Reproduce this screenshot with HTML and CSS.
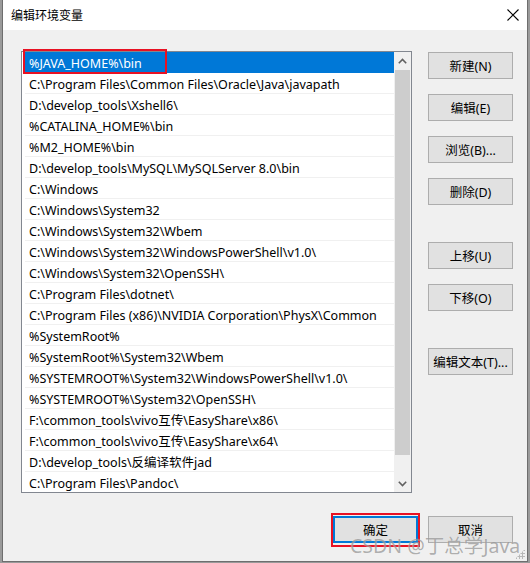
FILE: index.html
```html
<!DOCTYPE html>
<html lang="zh">
<head>
<meta charset="utf-8">
<title>编辑环境变量</title>
<link rel="stylesheet" href="styles.css">
</head>
<body>
<div class="window">
  <div class="titlebar">
    <span class="title">编辑环境变量</span>
    <svg class="close" width="12" height="12" viewBox="0 0 12 12"><path d="M0.5 0.5 L11.5 11.5 M11.5 0.5 L0.5 11.5" stroke="#000" stroke-width="1.1" fill="none"/></svg>
  </div>
  <div class="client">
    <div class="main">
      <div class="listbox">
        <div class="rows">
          <div class="row selected">%JAVA_HOME%\bin</div>
          <div class="row">C:\Program Files\Common Files\Oracle\Java\javapath</div>
          <div class="row">D:\develop_tools\Xshell6\</div>
          <div class="row">%CATALINA_HOME%\bin</div>
          <div class="row">%M2_HOME%\bin</div>
          <div class="row">D:\develop_tools\MySQL\MySQLServer 8.0\bin</div>
          <div class="row">C:\Windows</div>
          <div class="row">C:\Windows\System32</div>
          <div class="row">C:\Windows\System32\Wbem</div>
          <div class="row">C:\Windows\System32\WindowsPowerShell\v1.0\</div>
          <div class="row">C:\Windows\System32\OpenSSH\</div>
          <div class="row">C:\Program Files\dotnet\</div>
          <div class="row">C:\Program Files (x86)\NVIDIA Corporation\PhysX\Common</div>
          <div class="row">%SystemRoot%</div>
          <div class="row">%SystemRoot%\System32\Wbem</div>
          <div class="row">%SYSTEMROOT%\System32\WindowsPowerShell\v1.0\</div>
          <div class="row">%SYSTEMROOT%\System32\OpenSSH\</div>
          <div class="row">F:\common_tools\vivo互传\EasyShare\x86\</div>
          <div class="row">F:\common_tools\vivo互传\EasyShare\x64\</div>
          <div class="row">D:\develop_tools\反编译软件jad</div>
          <div class="row last">C:\Program Files\Pandoc\</div>
        </div>
        <div class="scrollbar">
          <div class="arrow"><svg width="9" height="6" viewBox="0 0 9 6"><path d="M0.8 5.2 L4.5 1.5 L8.2 5.2" stroke="#606060" stroke-width="1.6" fill="none"/></svg></div>
          <div class="track"><div class="thumb"></div></div>
          <div class="arrow"><svg width="9" height="6" viewBox="0 0 9 6"><path d="M0.8 0.8 L4.5 4.5 L8.2 0.8" stroke="#606060" stroke-width="1.6" fill="none"/></svg></div>
        </div>
      </div>
      <div class="actions">
        <div class="group">
          <button class="btn">新建(N)</button>
          <button class="btn">编辑(E)</button>
          <button class="btn">浏览(B)...</button>
          <button class="btn">删除(D)</button>
        </div>
        <div class="group">
          <button class="btn">上移(U)</button>
          <button class="btn">下移(O)</button>
        </div>
        <div class="group">
          <button class="btn">编辑文本(T)...</button>
        </div>
      </div>
    </div>
    <div class="footer">
      <button class="btn default">确定</button>
      <button class="btn">取消</button>
    </div>
    <div class="grip"></div>
  </div>
  <div class="mark mark-row"></div>
  <div class="mark mark-ok"></div>
  <div class="watermark">CSDN @丁总学Java</div>
</div>
</body>
</html>
```
FILE: styles.css
```css
* { box-sizing: border-box; }
html, body { margin: 0; padding: 0; }
body {
  width: 530px;
  height: 563px;
  background: #9a9a9a;
  font-family: "Noto Sans", "Noto Sans CJK SC", sans-serif;
  font-size: 12px;
  color: #000;
  overflow: hidden;
}
.window {
  position: relative;
  margin-left: 2px;
  width: 526px;
  height: 562px;
  border: 1px solid #6e6e6e;
  border-top: none;
  background: #f0f0f0;
  display: flex;
  flex-direction: column;
}
.titlebar {
  height: 30px;
  background: #fff;
  display: flex;
  align-items: center;
  justify-content: space-between;
  padding: 0 8px 2px 8px;
  flex: none;
}
.title {
  font-family: "Noto Sans CJK SC", sans-serif;
  font-size: 12px;
}
.close { margin-top: 1px; }
.client {
  position: relative;
  flex: 1;
  padding: 21px 13px 0 18px;
}
.main {
  display: flex;
  gap: 16px;
}
.listbox {
  width: 391px;
  height: 442px;
  border: 1px solid #828790;
  background: #fff;
  display: flex;
  overflow: hidden;
}
.rows {
  flex: 1;
  padding-left: 3px;
}
.row {
  height: 21px;
  line-height: 20px;
  padding-left: 4px;
  padding-top: 2px;
  border-bottom: 1px solid #f0f0f0;
  white-space: nowrap;
  overflow: hidden;
  font-family: "Noto Sans", "Noto Sans CJK SC", sans-serif;
  font-size: 12.5px;
}
.row.selected {
  background: #0078d7;
  color: #fff;
  border-bottom-color: #0078d7;
}
.scrollbar {
  width: 17px;
  flex: none;
  background: #f0f0f0;
  display: flex;
  flex-direction: column;
}
.arrow {
  height: 17px;
  display: flex;
  align-items: center;
  justify-content: center;
  flex: none;
}
.track {
  flex: 1;
  padding: 1px 1px 0 1px;
}
.thumb {
  height: 385px;
  background: #cdcdcd;
}
.actions {
  width: 85px;
  padding-top: 1px;
  display: flex;
  flex-direction: column;
  gap: 37px;
}
.group {
  display: flex;
  flex-direction: column;
  gap: 15px;
}
.btn {
  width: 85px;
  height: 27px;
  margin: 0;
  padding: 0;
  background: #e1e1e1;
  border: 1px solid #adadad;
  font-family: "Noto Sans", "Noto Sans CJK SC", sans-serif;
  font-size: 12.5px;
  color: #000;
}
.footer {
  display: flex;
  justify-content: flex-end;
  gap: 10px;
  margin-top: 23px;
  padding-right: 1px;
}
.btn.default {
  border: 2px solid #0078d7;
}
.grip {
  position: absolute;
  right: 2px;
  bottom: 2px;
  width: 10px;
  height: 10px;
  background:
    radial-gradient(circle, #b8b8b8 1px, transparent 1.2px) 0 0 / 3px 3px;
  clip-path: polygon(100% 0, 100% 100%, 0 100%);
}
.mark {
  position: absolute;
  border: 2px solid #e81123;
  pointer-events: none;
}
.mark-row {
  left: 20px;
  top: 49px;
  width: 144px;
  height: 25px;
}
.mark-ok {
  left: 328px;
  top: 513px;
  width: 89px;
  height: 34px;
}
.watermark {
  position: absolute;
  left: 347px;
  top: 530px;
  font-family: "Noto Sans", "Noto Sans CJK SC", sans-serif;
  font-size: 19.5px;
  color: rgba(110, 110, 110, 0.55);
  white-space: nowrap;
  text-shadow: 0 0 1px rgba(255,255,255,0.6);
}
```
